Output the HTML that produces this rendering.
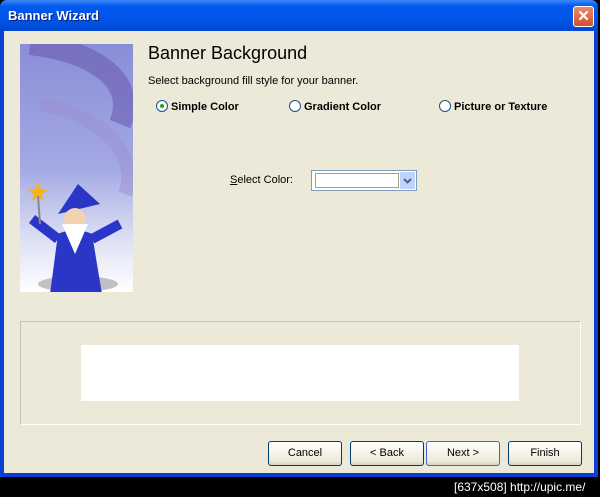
<!DOCTYPE html><html><head><style>
body{margin:0;width:600px;height:497px;background:#000;position:relative;overflow:hidden;font-family:"Liberation Sans",sans-serif;font-size:11px}
.win{position:absolute;left:0;top:0;width:598px;height:477px;background:#0a3fd6;border-radius:7px 7px 0 0}
.title{position:absolute;left:0;top:0;width:598px;height:31px;border-radius:7px 7px 0 0;background:linear-gradient(#3d8af7,#0058ee 20%,#0054e3 70%,#0046d0)}
.title span{position:absolute;left:8px;top:8px;color:#fff;font-weight:bold;font-size:13px;font-family:"Liberation Sans",sans-serif;text-shadow:1px 1px #0a1e7a}
.x{position:absolute;left:573px;top:6px;width:19px;height:19px;border:1px solid #fff;border-radius:3px;background:linear-gradient(#e88a6f,#d0502a);color:#fff;font:bold 15px/19px "Liberation Sans";text-align:center}
.client{position:absolute;left:4px;top:31px;width:590px;height:442px;background:#ece9d8}
.a{position:absolute;white-space:nowrap}
.pic{left:20px;top:44px;width:113px;height:248px;background:linear-gradient(#8a8ed8,#a3a9e3 50%,#dfe2f5 80%,#fff)}
.rad{display:inline-block;width:10px;height:10px;border:1px solid #1c5180;border-radius:50%;background:#fff;vertical-align:-2px;margin-right:3px;position:relative}
.btn{position:absolute;top:441px;width:72px;height:23px;border:1px solid #003c74;border-radius:3px;background:linear-gradient(#fff,#ece9d8 85%,#d6d0c5);text-align:center;line-height:23px;font-size:11px}
</style></head><body>
<div class="win"></div>
<div class="title"><span>Banner Wizard</span><div class="x">✕</div></div>
<div class="client"></div>
<div class="a pic">
<svg width="113" height="248"><path d="M10 0 C60 5 120 30 100 80" stroke="#6a5cb0" stroke-width="22" fill="none" opacity=".6"/><path d="M20 60 C80 70 120 110 105 150" stroke="#9a8fcf" stroke-width="14" fill="none" opacity=".5"/>
<ellipse cx="58" cy="240" rx="40" ry="8" fill="#888" opacity=".5"/>
<path d="M30 250 L38 190 Q55 182 72 190 L82 250Z" fill="#2a36c8"/><path d="M38 195 L12 175 M72 195 L100 180" stroke="#2a36c8" stroke-width="10"/>
<path d="M38 170 L58 140 L80 160Z" fill="#2a36c8"/><circle cx="55" cy="175" r="11" fill="#f3d2b0"/><path d="M42 180 L55 210 L68 180Z" fill="#fff"/>
<path d="M15 145 L18 138 L21 145 L28 146 L22 150 L24 157 L18 153 L12 157 L14 150 L8 146Z" fill="#f5b320"/><line x1="18" y1="152" x2="20" y2="180" stroke="#888" stroke-width="2"/></svg></div>
<div class="a" style="left:148px;top:43px;font-size:18px">Banner Background</div>
<div class="a" style="left:148px;top:75px">Select background fill style for your banner.</div>
<div class="a" style="left:156px;top:100px;font-weight:bold"><span class="rad"><span style="position:absolute;left:3px;top:3px;width:4px;height:4px;border-radius:50%;background:#21a121"></span></span>Simple Color</div>
<div class="a" style="left:289px;top:100px;font-weight:bold"><span class="rad"></span>Gradient Color</div>
<div class="a" style="left:439px;top:100px;font-weight:bold"><span class="rad"></span>Picture or Texture</div>
<div class="a" style="left:230px;top:174px"><u>S</u>elect Color:</div>
<div class="a" style="left:311px;top:170px;width:104px;height:19px;border:1px solid #7f9db9;background:#fff"><div style="position:absolute;left:3px;top:2px;width:82px;height:13px;border:1px solid #a89e86"></div><div style="position:absolute;right:1px;top:1px;width:15px;height:17px;background:#c1d3fb"><svg width="15" height="17"><path d="M4 7 L7.5 10.5 L11 7" stroke="#4d6185" stroke-width="2" fill="none"/></svg></div></div>
<div class="a" style="left:20px;top:321px;width:559px;height:102px;border:1px solid #c8c3b0;border-right-color:#fff;border-bottom-color:#fff"></div>
<div class="a" style="left:81px;top:345px;width:438px;height:56px;background:#fff"></div>
<div class="btn" style="left:268px">Cancel</div>
<div class="btn" style="left:350px">&lt; Back</div>
<div class="btn" style="left:426px;border-color:#3c66c8">Next &gt;</div>
<div class="btn" style="left:508px">Finish</div>
<div class="a" style="left:454px;top:480px;color:#fff;font-size:12px">[637x508] http://upic.me/</div>
</body></html>
